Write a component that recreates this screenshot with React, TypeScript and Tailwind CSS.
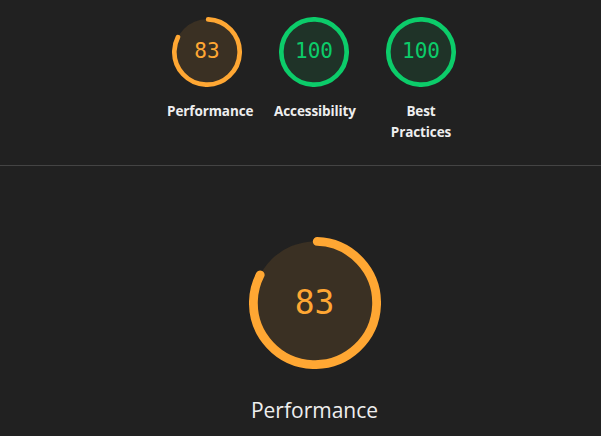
import React from "react";

type GaugeProps = { score: number; size: number; color: string; fill: string; textClass: string };

function Gauge({ score, size, color, fill, textClass }: GaugeProps) {
  const r = 56;
  const sw = 8;
  const circ = 2 * Math.PI * r;
  const adj = (0.25 * sw) / circ;
  let len = score * circ - sw / 2;
  if (score === 1) len = circ;
  return (
    <div className="relative" style={{ width: size, height: size }}>
      <svg viewBox="0 0 120 120" width={size} height={size} className="block">
        <circle cx="60" cy="60" r={r} fill={fill} />
        <circle
          cx="60"
          cy="60"
          r={r}
          fill="none"
          stroke={color}
          strokeWidth={sw}
          strokeLinecap="round"
          strokeDasharray={`${len} ${circ}`}
          style={{ transform: `rotate(${-90 + adj * 360}deg)`, transformOrigin: "60px 60px" }}
        />
      </svg>
      <div
        className={`absolute inset-0 flex items-center justify-center ${textClass}`}
        style={{ color, fontFamily: '"DejaVu Sans Mono", monospace' }}
      >
        {score === 1 ? "100" : Math.round(score * 100)}
      </div>
    </div>
  );
}

const ORANGE = "#ffa733";
const ORANGE_FILL = "#3a3023";
const GREEN = "#0ccc6a";
const GREEN_FILL = "#1f3328";

export default function App() {
  const small = [
    { score: 0.83, color: ORANGE, fill: ORANGE_FILL, label: "Performance" },
    { score: 1, color: GREEN, fill: GREEN_FILL, label: "Accessibility" },
    { score: 1, color: GREEN, fill: GREEN_FILL, label: "Best Practices" },
  ];
  return (
    <div
      className="w-[601px] h-[436px] overflow-hidden bg-[#212121] text-[#eeeeee]"
      style={{ fontFamily: '"Open Sans", "Noto Sans", sans-serif' }}
    >
      <div className="flex justify-center pl-[27px] pt-[17px] pb-[22px] border-b border-[#444444]">
        {small.map((g) => (
          <div key={g.label} className="w-[107px] flex flex-col items-center">
            <Gauge score={g.score} size={70} color={g.color} fill={g.fill} textClass="text-[21px]" />
            <div className="mt-[14px] text-[13.5px] leading-[21px] font-bold text-center w-[80px] tracking-[-0.1px]">
              {g.label}
            </div>
          </div>
        ))}
      </div>
      <div className="flex flex-col items-center pl-[28px] pt-[71px]">
        <Gauge score={0.83} size={132} color={ORANGE} fill={ORANGE_FILL} textClass="text-[33px]" />
        <div className="mt-[27px] text-[21px] leading-[28px]">Performance</div>
      </div>
    </div>
  );
}
